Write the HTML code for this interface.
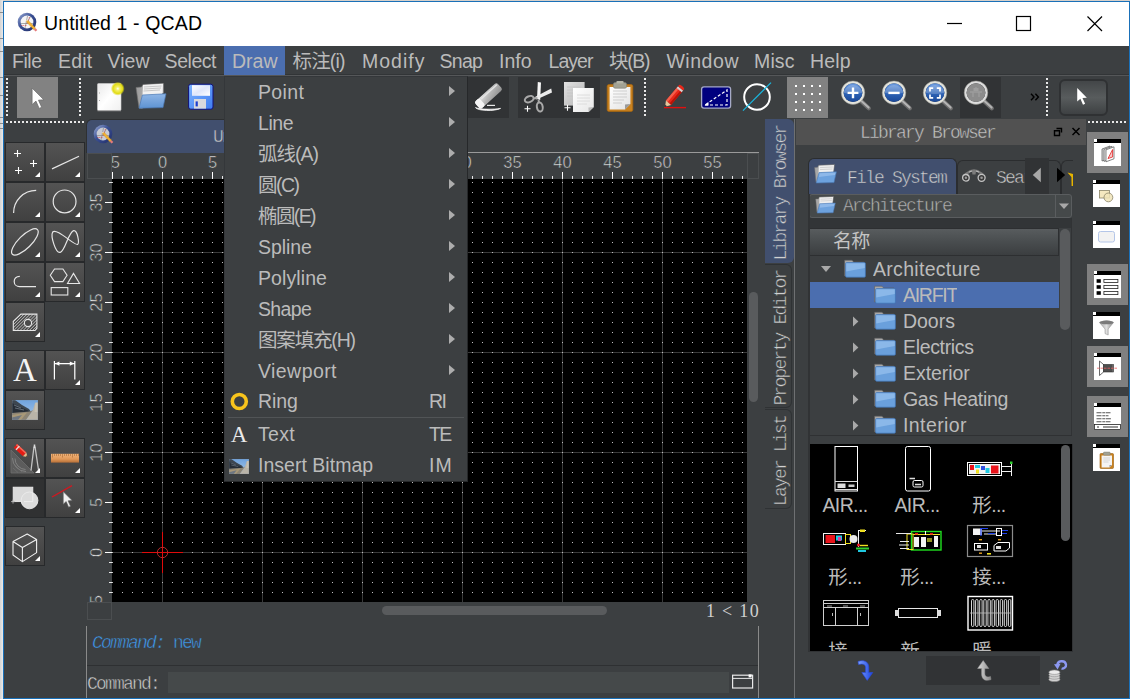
<!DOCTYPE html><html><head><meta charset="utf-8"><title>Untitled 1 - QCAD</title><style>
html,body{margin:0;padding:0;}
body{width:1130px;height:699px;overflow:hidden;background:#3c3f41;position:relative;font-family:"Liberation Sans","Noto Sans CJK SC",sans-serif;color:#bbbbbb;}
#root{position:absolute;left:0;top:0;width:1130px;height:699px;overflow:hidden;background:#3c3f41;}
.a{position:absolute;}
.t{position:absolute;white-space:pre;line-height:1;}
.mi{position:absolute;top:51.2px;font-size:19.5px;line-height:21px;color:#bbbbbb;white-space:pre;}
.mono{font-family:"Liberation Mono","Noto Sans CJK SC",monospace;}
.serif{font-family:"Liberation Serif","Noto Serif CJK SC",serif;}
.tb{position:absolute;width:40px;height:40px;box-sizing:border-box;border:1px solid #27292b;background:linear-gradient(#535353,#404040);}
.tb i{position:absolute;right:4px;bottom:4px;width:0;height:0;border-left:5px solid transparent;border-bottom:5px solid #fff;}
.tb svg{position:absolute;left:0;top:0;}
.row{position:absolute;left:810px;width:250px;height:26px;font-size:19.5px;line-height:26px;color:#bbbbbb;white-space:pre;}
.pm{position:absolute;left:258px;font-size:18px;line-height:22px;color:#bbbbbb;white-space:pre;}
.arr{position:absolute;left:449px;width:0;height:0;border-top:5px solid transparent;border-bottom:5px solid transparent;border-left:6px solid #adadad;}
.rb{position:absolute;left:1087px;width:41px;height:41px;}
.rb.on{background:#808080;}
.ic{position:absolute;left:7px;top:7px;width:27px;height:27px;background:#fff;overflow:hidden;}
.ic:before{content:"";position:absolute;left:0;top:0;width:27px;height:4px;background:#000;}
.ic:after{content:"";position:absolute;left:0;top:0;width:3px;height:3px;background:#fff;border-right:1px solid #000;border-bottom:1px solid #000;}
.lbl{position:absolute;font-size:19.5px;line-height:20px;letter-spacing:-0.6px;color:#bbbbbb;white-space:pre;text-align:center;width:72px;}
</style></head><body><div id="root">
<div class="a" style="left:0;top:0;width:1130px;height:1px;background:#d6d0ca"></div>
<div class="a" style="left:0;top:0;width:3px;height:699px;background:linear-gradient(90deg,#d4d4d4,#e9e9e9)"></div>
<div class="a" style="left:0;top:12px;width:3px;height:1px;background:#8c8c8c"></div>
<div class="a" style="left:0;top:38px;width:3px;height:1px;background:#8c8c8c"></div>
<div class="a" style="left:0;top:51px;width:3px;height:1px;background:#8c8c8c"></div>
<div class="a" style="left:0;top:77px;width:3px;height:1px;background:#8c8c8c"></div>
<div class="a" style="left:0;top:95px;width:3px;height:1px;background:#8c8c8c"></div>
<div class="a" style="left:0;top:117px;width:3px;height:1px;background:#8c8c8c"></div>
<div class="a" style="left:0;top:123px;width:3px;height:1px;background:#8c8c8c"></div>
<div class="a" style="left:0;top:128px;width:3px;height:1px;background:#8c8c8c"></div>
<div class="a" style="left:3px;top:1px;width:1127px;height:698px;box-sizing:border-box;border:1px solid #1a70b8;pointer-events:none;z-index:50"></div>
<div class="a" style="left:4px;top:2px;width:1125px;height:44px;background:#fff"></div>
<svg class="a" style="left:17px;top:12px" width="23" height="23" viewBox="0 0 23 23">
<defs><linearGradient id="qg1712" x1="0" y1="0" x2="1" y2="1"><stop offset="0" stop-color="#9fb0d8"/><stop offset="0.45" stop-color="#3a4f94"/><stop offset="1" stop-color="#1f2c66"/></linearGradient></defs>
<circle cx="10" cy="10" r="9.3" fill="url(#qg1712)"/>
<circle cx="10" cy="10" r="6.4" fill="#f4f4f6"/>
<path d="M4 11.5H16M10.5 4L8 16M13.5 4.5L9.5 12" stroke="#8a8a8a" stroke-width="0.7" fill="none"/>
<path d="M4.5 13.5H10M12.5 5L10 12" stroke="#e04040" stroke-width="0.7" stroke-dasharray="1 0.7" fill="none"/>
<path d="M9.3 9.6L11.2 8.4L18.6 16.2L16.8 17.8Z" fill="#f3b233" stroke="#c98a1a" stroke-width="0.4"/>
<path d="M16.8 17.8L18.6 16.2L20.3 18L18.6 19.6Z" fill="#e47a7a"/>
<path d="M9.3 9.6L11.2 8.4L9 7.9Z" fill="#f7e2b0"/>
</svg>
<div class="t" style="left:44px;top:12px;font-size:19.5px;line-height:23px;color:#000;letter-spacing:0.12px">Untitled 1 - QCAD</div>
<svg class="a" style="left:930px;top:2px" width="199" height="44" viewBox="0 0 199 44">
<path d="M17 21.5H32" stroke="#000" stroke-width="1.2" fill="none"/>
<rect x="86.5" y="14.5" width="14" height="14" stroke="#000" stroke-width="1.2" fill="none"/>
<path d="M157.5 14.5L172 29M172 14.5L157.5 29" stroke="#000" stroke-width="1.2" fill="none"/>
</svg>
<div class="a" style="left:4px;top:46px;width:1125px;height:29px;background:#3c3f41"></div>
<div class="a" style="left:4px;top:74px;width:1125px;height:1px;background:#323537"></div>
<div class="a" style="left:4px;top:75px;width:1125px;height:1px;background:#555759"></div>
<div class="a" style="left:224px;top:46px;width:61px;height:29px;background:#4b6eaf"></div>
<div class="mi" style="left:12.0px;letter-spacing:-0.44px">File</div>
<div class="mi" style="left:58.0px;letter-spacing:0.16px">Edit</div>
<div class="mi" style="left:107.6px;letter-spacing:-0.01px">View</div>
<div class="mi" style="left:164.6px;letter-spacing:-0.46px">Select</div>
<div class="mi" style="left:232.0px;letter-spacing:-0.01px">Draw</div>
<div class="mi" style="left:292.6px;letter-spacing:-0.86px">标注(i)</div>
<div class="mi" style="left:362.0px;letter-spacing:1.00px">Modify</div>
<div class="mi" style="left:439.6px;letter-spacing:-0.75px">Snap</div>
<div class="mi" style="left:499.0px;letter-spacing:-0.01px">Info</div>
<div class="mi" style="left:548.6px;letter-spacing:-0.97px">Layer</div>
<div class="mi" style="left:609.0px;letter-spacing:-1.33px">块(B)</div>
<div class="mi" style="left:666.4px;letter-spacing:0.55px">Window</div>
<div class="mi" style="left:754.0px;letter-spacing:0.14px">Misc</div>
<div class="mi" style="left:810.0px;letter-spacing:0.13px">Help</div>
<div class="a" style="left:6px;top:78px;width:2px;height:38px;background:repeating-linear-gradient(180deg,#e8e8e8 0 2px,transparent 2px 4px)"></div>
<div class="a" style="left:79px;top:78px;width:2px;height:38px;background:repeating-linear-gradient(180deg,#e8e8e8 0 2px,transparent 2px 4px)"></div>
<div class="a" style="left:6px;top:121px;width:78px;height:2px;background:repeating-linear-gradient(90deg,#e8e8e8 0 2px,transparent 2px 4px)"></div>
<div class="a" style="left:644px;top:78px;width:2px;height:38px;background:repeating-linear-gradient(180deg,#e8e8e8 0 2px,transparent 2px 4px)"></div>
<div class="a" style="left:1046px;top:78px;width:2px;height:38px;background:repeating-linear-gradient(180deg,#e8e8e8 0 2px,transparent 2px 4px)"></div>
<div class="a" style="left:1088px;top:121px;width:40px;height:2px;background:repeating-linear-gradient(90deg,#e8e8e8 0 2px,transparent 2px 4px)"></div>
<div class="a" style="left:17px;top:77px;width:41px;height:41px;background:#828282"></div>
<svg class="a" style="left:31px;top:87px" width="15" height="23" viewBox="-1 -1 14 21.5"><path d="M0 0V15.5L3.6 12.2L6.6 19L9 18L6 11.3L11 11Z" fill="#fff" stroke="#6a6a6a" stroke-width="0.7"/></svg>
<div class="a" style="left:468px;top:77px;width:41px;height:41px;background:#313335"></div>
<div class="a" style="left:518px;top:77px;width:82px;height:41px;background:#313335"></div>
<div class="a" style="left:960px;top:77px;width:41px;height:41px;background:#313335"></div>
<div class="a" style="left:787px;top:77px;width:41px;height:41px;background:#828282"></div>
<svg class="a" style="left:787px;top:77px" width="41" height="41" fill="#fff" shape-rendering="crispEdges"><rect x="8" y="8" width="2" height="2"/><rect x="8" y="16" width="2" height="2"/><rect x="8" y="24" width="2" height="2"/><rect x="8" y="32" width="2" height="2"/><rect x="16" y="8" width="2" height="2"/><rect x="16" y="16" width="2" height="2"/><rect x="16" y="24" width="2" height="2"/><rect x="16" y="32" width="2" height="2"/><rect x="24" y="8" width="2" height="2"/><rect x="24" y="16" width="2" height="2"/><rect x="24" y="24" width="2" height="2"/><rect x="24" y="32" width="2" height="2"/><rect x="32" y="8" width="2" height="2"/><rect x="32" y="16" width="2" height="2"/><rect x="32" y="24" width="2" height="2"/><rect x="32" y="32" width="2" height="2"/></svg>
<svg class="a" style="left:94px;top:79px" width="34" height="36" viewBox="0 0 34 36">
<defs><linearGradient id="pg" x1="0" y1="0" x2="1" y2="1"><stop offset="0" stop-color="#e9e9e9"/><stop offset="0.5" stop-color="#ffffff"/><stop offset="1" stop-color="#f0f0f0"/></linearGradient>
<radialGradient id="yg"><stop offset="0" stop-color="#ffffff"/><stop offset="0.25" stop-color="#f4f06a"/><stop offset="0.7" stop-color="#e2dc14"/><stop offset="1" stop-color="#d8d000" stop-opacity="0"/></radialGradient></defs>
<rect x="3.5" y="4.5" width="23.5" height="27" rx="1" fill="url(#pg)" stroke="#cfcfcf" stroke-width="0.6"/>
<path d="M3.5 31.8H27" stroke="#9a9a9a" stroke-width="0.8"/>
<rect x="5" y="13.6" width="1" height="0.8" fill="#999"/><rect x="5" y="21.2" width="1" height="0.8" fill="#999"/>
<circle cx="23.8" cy="9.7" r="7" fill="url(#yg)"/>
</svg>
<svg class="a" style="left:134px;top:79px" width="36" height="36" viewBox="0 0 36 36">
<defs><linearGradient id="fb" x1="0" y1="0" x2="0" y2="1"><stop offset="0" stop-color="#8fb6e6"/><stop offset="1" stop-color="#5e93d2"/></linearGradient>
<linearGradient id="fg" x1="0" y1="0" x2="1" y2="0"><stop offset="0" stop-color="#9a9a9a"/><stop offset="1" stop-color="#d8d8d8"/></linearGradient></defs>
<path d="M2 8.5L7.5 8L9 5.5L29.5 4.5L29.5 14L8 29.5L5 29Z" fill="url(#fg)" stroke="#6e6e6e" stroke-width="0.6"/>
<path d="M9 6L29 4.8L28 15L8 26Z" fill="#f1f1f1"/>
<path d="M10 8L27.5 7M10 10L27 9M9.5 12L26 11" stroke="#b5b5b5" stroke-width="0.7"/>
<path d="M8.4 16L32 14.8L29 28.6L5 29.2Z" fill="url(#fb)" stroke="#4a78b4" stroke-width="0.7"/>
</svg>
<svg class="a" style="left:186px;top:82px" width="30" height="30" viewBox="0 0 30 30">
<defs><linearGradient id="sv" x1="0" y1="0" x2="1" y2="1"><stop offset="0" stop-color="#7db4ff"/><stop offset="1" stop-color="#3f7cf0"/></linearGradient>
<linearGradient id="lb" x1="0" y1="0" x2="1" y2="1"><stop offset="0" stop-color="#ffffff"/><stop offset="0.5" stop-color="#dfe6fb"/><stop offset="1" stop-color="#ffffff"/></linearGradient></defs>
<rect x="2.6" y="2.2" width="24.4" height="25" rx="2.2" fill="url(#sv)" stroke="#10107a" stroke-width="1"/>
<rect x="6" y="3.2" width="18" height="10.6" fill="url(#lb)"/>
<rect x="8" y="17" width="12" height="9.6" fill="#d9d9dd"/>
<rect x="9.6" y="19.4" width="2.2" height="5" fill="#1c3fd0"/>
</svg>
<svg class="a" style="left:468px;top:77px" width="41" height="41" viewBox="0 0 41 41">
<defs><linearGradient id="er" x1="0" y1="0" x2="1" y2="1"><stop offset="0" stop-color="#f2f2f2"/><stop offset="0.5" stop-color="#b8b8b8"/><stop offset="1" stop-color="#8e8e8e"/></linearGradient></defs>
<g transform="rotate(-42 20 19)"><rect x="5.5" y="14.5" width="30" height="9.5" rx="2.5" fill="url(#er)"/>
<rect x="5.5" y="14.5" width="6.5" height="9.5" rx="2" fill="#f4f4f4"/><path d="M13 16.6H34" stroke="#e4e4e4" stroke-width="1.4"/></g>
<path d="M7.5 30.6C10 34 26 34.6 32.6 31.4C26 32.6 12 32.6 7.5 30.6Z" fill="#f4f4f4" stroke="#f4f4f4" stroke-width="0.8"/>
<path d="M19 28.4H27" stroke="#e8e8e8" stroke-width="1.2"/>
</svg>
<svg class="a" style="left:518px;top:77px" width="41" height="41" viewBox="0 0 41 41">
<path d="M19.8 5L23 5.5L22.2 23L19 22Z" fill="#f6f6f6"/>
<path d="M33.2 11.6L34 15.4L18.5 22.5L17 20Z" fill="#ececec"/>
<ellipse cx="11.2" cy="22.2" rx="4.6" ry="2.9" transform="rotate(-22 11.2 22.2)" fill="none" stroke="#a9a9a9" stroke-width="2"/>
<ellipse cx="21.8" cy="30" rx="2.9" ry="4.6" transform="rotate(-10 21.8 30)" fill="none" stroke="#a9a9a9" stroke-width="2"/>
<path d="M15 21.5L19.5 21M20.5 23L21 26" stroke="#a9a9a9" stroke-width="2"/>
<path d="M6.5 31.8H12.5M9.5 28.8V34.8" stroke="#fff" stroke-width="1.1"/>
</svg>
<svg class="a" style="left:559px;top:77px" width="41" height="41" viewBox="0 0 41 41">
<defs><linearGradient id="cp1" x1="0" y1="0" x2="1" y2="1"><stop offset="0" stop-color="#e2e2e2"/><stop offset="1" stop-color="#b4b4b4"/></linearGradient>
<linearGradient id="cp2" x1="0" y1="0" x2="1" y2="1"><stop offset="0" stop-color="#ffffff"/><stop offset="1" stop-color="#e6e6e6"/></linearGradient></defs>
<rect x="5" y="5" width="20.6" height="23.6" fill="url(#cp1)"/>
<path d="M8 10H22M8 13H22M8 16H22M8 19H22" stroke="#c4c4c4" stroke-width="0.8"/>
<path d="M14 11H34.8V30L29.6 35H14Z" fill="url(#cp2)"/>
<path d="M34.8 30L29.6 35L29.4 30.4Z" fill="#bdbdbd"/>
<path d="M18 18H31M18 21H31M18 24H31M18 27H28" stroke="#dadada" stroke-width="0.9"/>
<path d="M5.5 30.8H11.5M8.5 27.8V33.8" stroke="#fff" stroke-width="1.1"/>
</svg>
<svg class="a" style="left:600px;top:77px" width="41" height="41" viewBox="0 0 41 41">
<defs><linearGradient id="pp" x1="0" y1="0" x2="1" y2="1"><stop offset="0" stop-color="#ffffff"/><stop offset="1" stop-color="#e2e2e2"/></linearGradient></defs>
<rect x="7.2" y="7.6" width="25.6" height="26.8" rx="1.6" fill="#c8811f" stroke="#a7660f" stroke-width="0.8"/>
<path d="M9.6 10H30.4V27L25 32.4H9.6Z" fill="url(#pp)"/>
<path d="M30.4 27L25 32.4L25 27.4Z" fill="#9a9a9a"/>
<path d="M13 14H27M13 17H27M13 20H27M13 23H24M13 26H22" stroke="#c9c9c9" stroke-width="0.9"/>
<rect x="13.4" y="5.6" width="13.2" height="5.6" rx="1.6" fill="#a2a294" stroke="#7e7e72" stroke-width="0.6"/>
<rect x="16.4" y="4" width="7.2" height="2.6" rx="1" fill="#b5b5a8"/>
</svg>
<svg class="a" style="left:654px;top:77px" width="41" height="41" viewBox="0 0 41 41">
<path d="M10 30.6H32" stroke="#e01010" stroke-width="1.4"/>
<g transform="translate(21 18) rotate(-50) scale(0.92) translate(-19 -19.2)"><rect x="8" y="15.6" width="19" height="7.2" fill="#e8281a"/><rect x="8" y="15.6" width="19" height="2.4" fill="#f4604c"/><rect x="8" y="20.6" width="19" height="2.2" fill="#b81408"/>
<rect x="26" y="15.6" width="2.4" height="7.2" fill="#d8d0d0"/><path d="M28.4 15.6H30.5Q32.4 19.2 30.5 22.8H28.4Z" fill="#e8281a"/>
<path d="M8 15.6L2.2 19.2L8 22.8Z" fill="#e8c49a"/><path d="M4 18L2 19.2L4 20.4Z" fill="#222"/></g>
</svg>
<svg class="a" style="left:695px;top:77px" width="41" height="41" viewBox="0 0 41 41">
<rect x="6.6" y="9.8" width="29" height="21.4" rx="2.4" fill="#00007e" stroke="#a6aac6" stroke-width="1.3"/>
<path d="M10 28H32V13Z" fill="none" stroke="#fff" stroke-width="1.2" stroke-dasharray="3 2"/>
<path d="M9.6 28.4L13.4 25L13.6 28.4Z" fill="#fff"/>
</svg>
<svg class="a" style="left:736px;top:77px" width="41" height="41" viewBox="0 0 41 41">
<circle cx="21" cy="20" r="12.8" fill="none" stroke="#fff" stroke-width="2"/>
<path d="M7 33.6L35 5.6" stroke="#18b8e0" stroke-width="1.2"/>
</svg>
<svg width="0" height="0" style="position:absolute"><defs><linearGradient id="lg" x1="0" y1="0" x2="0" y2="1"><stop offset="0" stop-color="#6c9be0"/><stop offset="0.5" stop-color="#2f65b8"/><stop offset="1" stop-color="#1a4796"/></linearGradient></defs></svg>
<svg class="a" style="left:837.2px;top:77px" width="38" height="41" viewBox="0 0 38 41">
<path d="M23.6 23.6L31.8 31.2" stroke="#6e6e6e" stroke-width="4.2" stroke-linecap="round"/>
<path d="M23.6 23.2L31.6 30.6" stroke="#b4b4b4" stroke-width="2" stroke-linecap="round"/>
<circle cx="16" cy="15.7" r="10.6" fill="none" stroke="#e4e4dc" stroke-width="2.4"/>
<circle cx="16" cy="15.7" r="11.8" fill="none" stroke="#8a8a84" stroke-width="0.5"/>
<circle cx="16" cy="15.7" r="9.4" fill="url(#lg)"/><path d="M6.6 15.7A9.6 9.6 0 0 1 25.4 15.7Q16 18.4 6.6 15.7Z" fill="#fff" opacity="0.22"/><path d="M10.6 15.9H21.4M16 10.5V21.3" stroke="#fff" stroke-width="2.4"/></svg>
<svg class="a" style="left:878.1px;top:77px" width="38" height="41" viewBox="0 0 38 41">
<path d="M23.6 23.6L31.8 31.2" stroke="#6e6e6e" stroke-width="4.2" stroke-linecap="round"/>
<path d="M23.6 23.2L31.6 30.6" stroke="#b4b4b4" stroke-width="2" stroke-linecap="round"/>
<circle cx="16" cy="15.7" r="10.6" fill="none" stroke="#e4e4dc" stroke-width="2.4"/>
<circle cx="16" cy="15.7" r="11.8" fill="none" stroke="#8a8a84" stroke-width="0.5"/>
<circle cx="16" cy="15.7" r="9.4" fill="url(#lg)"/><path d="M6.6 15.7A9.6 9.6 0 0 1 25.4 15.7Q16 18.4 6.6 15.7Z" fill="#fff" opacity="0.22"/><path d="M10.4 15.9H21.6" stroke="#fff" stroke-width="2.4"/></svg>
<svg class="a" style="left:919.2px;top:77px" width="38" height="41" viewBox="0 0 38 41">
<path d="M23.6 23.6L31.8 31.2" stroke="#6e6e6e" stroke-width="4.2" stroke-linecap="round"/>
<path d="M23.6 23.2L31.6 30.6" stroke="#b4b4b4" stroke-width="2" stroke-linecap="round"/>
<circle cx="16" cy="15.7" r="10.6" fill="none" stroke="#e4e4dc" stroke-width="2.4"/>
<circle cx="16" cy="15.7" r="11.8" fill="none" stroke="#8a8a84" stroke-width="0.5"/>
<circle cx="16" cy="15.7" r="9.4" fill="url(#lg)"/><path d="M6.6 15.7A9.6 9.6 0 0 1 25.4 15.7Q16 18.4 6.6 15.7Z" fill="#fff" opacity="0.22"/><path d="M11 14.4V11.2H14.2M17.8 11.2H21V14.4M21 17.6V20.8H17.8M14.2 20.8H11V17.6" stroke="#fff" stroke-width="1.7" fill="none"/></svg>
<svg class="a" style="left:960.1px;top:77px" width="38" height="41" viewBox="0 0 38 41">
<path d="M23.6 23.6L31.8 31.2" stroke="#6e6e6e" stroke-width="4.2" stroke-linecap="round"/>
<path d="M23.6 23.2L31.6 30.6" stroke="#b4b4b4" stroke-width="2" stroke-linecap="round"/>
<circle cx="16" cy="15.7" r="10.6" fill="none" stroke="#dedede" stroke-width="2.4"/>
<circle cx="16" cy="15.7" r="11.8" fill="none" stroke="#8a8a84" stroke-width="0.5"/>
<circle cx="16" cy="15.7" r="9.4" fill="#8c8c8c"/><path d="M10 15H22M13 20V15M19 20V15M16 10V14" stroke="#9c9c9c" stroke-width="1.4"/><rect x="13.5" y="11" width="5" height="3" fill="#9e9e9e"/></svg>
<svg class="a" style="left:1030px;top:93px" width="10" height="8" viewBox="0 0 10 8"><path d="M1 0.8L4 4L1 7.2M5.4 0.8L8.4 4L5.4 7.2" stroke="#000" stroke-width="1.4" fill="none"/></svg>
<div class="a" style="left:1059px;top:79px;width:49px;height:37px;box-sizing:border-box;border:2px solid #2f3133;border-radius:6px;background:linear-gradient(#434648,#585c5d 50%,#3e4143)"></div>
<svg class="a" style="left:1077px;top:88px" width="12" height="20" viewBox="0 0 13.2 22.8"><path d="M0 0V15.5L3.6 12.2L6.6 19L9 18L6 11.3L11 11Z" fill="#fff"/></svg>
<div class="tb" style="left:5px;top:142px;"><svg width="38" height="38" viewBox="6 143 38 38" fill="none" stroke="#e6e6e6" stroke-width="1.1"><path d="M14 153.5H21M17.5 150V157M30 163.5H37M33.5 160V167M15 170.5H22M18.5 167V174" stroke="#fff" stroke-width="1.1"/></svg><i></i></div>
<div class="tb" style="left:45px;top:142px;"><svg width="38" height="38" viewBox="46 143 38 38" fill="none" stroke="#e6e6e6" stroke-width="1.1"><path d="M52 168.9L79 156.3" stroke-width="1.2"/></svg><i></i></div>
<div class="tb" style="left:5px;top:182px;"><svg width="38" height="38" viewBox="6 183 38 38" fill="none" stroke="#e6e6e6" stroke-width="1.1"><path d="M13.6 213A22.6 22.6 0 0 1 36.2 190.4" stroke-width="1.2"/></svg><i></i></div>
<div class="tb" style="left:45px;top:182px;"><svg width="38" height="38" viewBox="46 183 38 38" fill="none" stroke="#e6e6e6" stroke-width="1.1"><circle cx="64.6" cy="201.4" r="11.4" stroke-width="1.2"/></svg><i></i></div>
<div class="tb" style="left:5px;top:222px;"><svg width="38" height="38" viewBox="6 223 38 38" fill="none" stroke="#e6e6e6" stroke-width="1.1"><ellipse cx="24.9" cy="241.9" rx="17.6" ry="6.4" transform="rotate(-44.5 24.9 241.9)" stroke-width="1.2"/></svg><i></i></div>
<div class="tb" style="left:45px;top:222px;"><svg width="38" height="38" viewBox="46 223 38 38" fill="none" stroke="#e6e6e6" stroke-width="1.1"><path d="M52.6 232.2C50.5 236 55.5 253.5 60.2 252.4C65 251.3 68.5 232 73.6 230.6C77.5 229.6 79.5 243 77.6 244.4C75 246.3 56 227 52.6 232.2Z" stroke-width="1.2"/></svg><i></i></div>
<div class="tb" style="left:5px;top:262px;"><svg width="38" height="38" viewBox="6 263 38 38" fill="none" stroke="#e6e6e6" stroke-width="1.1"><path d="M19.8 276.3C15.8 276.3 14.2 279 14.2 281.4C14.2 284.4 16.6 286.6 19.6 286.6H36" stroke-width="1.2"/></svg><i></i></div>
<div class="tb" style="left:45px;top:262px;"><svg width="38" height="38" viewBox="46 263 38 38" fill="none" stroke="#e6e6e6" stroke-width="1.1"><polygon points="67.1,275.3 62.9,281.6 54.5,281.6 50.3,275.3 54.5,269.0 62.9,269.0" stroke-width="1.1"/><polygon points="73.5,273.4 67.5,283.5 79.6,283.5" stroke-width="1.1"/><rect x="51.2" y="287.6" width="16.6" height="7.4" stroke-width="1.1"/></svg><i></i></div>
<div class="tb" style="left:5px;top:302px;"><svg width="38" height="38" viewBox="6 303 38 38" fill="none" stroke="#e6e6e6" stroke-width="1.1"><defs><clipPath id="hc"><path d="M13.3 321.3L20.9 314.1H36.9V328.2L35 330.5H13.3Z M31.6 323A3.6 3.6 0 1 0 24.4 323A3.6 3.6 0 1 0 31.6 323Z" clip-rule="evenodd"/></clipPath></defs><g clip-path="url(#hc)" stroke-width="0.8" stroke="#dcdcdc"><path d="M-5.3 331L11.7 314" /><path d="M-2.2 331L14.8 314" /><path d="M0.9 331L17.9 314" /><path d="M4.0 331L21.0 314" /><path d="M7.1 331L24.1 314" /><path d="M10.2 331L27.2 314" /><path d="M13.3 331L30.3 314" /><path d="M16.4 331L33.4 314" /><path d="M19.5 331L36.5 314" /><path d="M22.6 331L39.6 314" /><path d="M25.7 331L42.7 314" /><path d="M28.8 331L45.8 314" /><path d="M31.9 331L48.9 314" /><path d="M35.0 331L52.0 314" /><path d="M38.1 331L55.1 314" /></g><path d="M13.3 321.3L20.9 314.1H36.9V328.2L35 330.5H13.3Z" stroke-width="1.1"/><circle cx="28" cy="323" r="3.6" stroke-width="1.1" fill="#4a4a4a"/></svg><i></i></div>
<div class="tb" style="left:5px;top:350px;"><span class="serif" style="position:absolute;left:0;top:0;width:38px;text-align:center;font-size:33px;line-height:38px;color:#f4f4f4">A</span></div>
<div class="tb" style="left:45px;top:350px;"><svg width="38" height="38" viewBox="46 351 38 38" fill="none" stroke="#e6e6e6" stroke-width="1.1"><path d="M54.4 361V379.5M74.8 361V379.5M55 363.6H74.2" stroke="#fff" stroke-width="1.2"/><path d="M55 363.6L59.4 361.4V365.8ZM74.2 363.6L69.8 361.4V365.8Z" fill="#fff" stroke="none"/></svg><i></i></div>
<div class="tb" style="left:5px;top:390px;"></div>
<svg class="a" style="left:12px;top:400px" width="26" height="20" viewBox="0 0 26 20" preserveAspectRatio="none">
<defs><linearGradient id="ska" x1="0" y1="0" x2="0" y2="1"><stop offset="0" stop-color="#6fa3de"/><stop offset="1" stop-color="#a9c7e8"/></linearGradient></defs>
<rect width="26" height="20" fill="url(#ska)"/>
<path d="M0 0H3L10 5L17 9L19 12L0 16Z" fill="#3d4650"/>
<path d="M0 3L8 7L16 10.5L17 12L0 13Z" fill="#262d36"/>
<path d="M2 5L9 8M3 8L12 10" stroke="#8e9aa6" stroke-width="0.6"/>
<path d="M23 3H26V20H14L21 10Z" fill="#b9b4a8"/>
<path d="M0 13L18 11.5L21 10L14 20H0Z" fill="#8c8474"/>
<path d="M0 15L15 12.5L9 20H0Z" fill="#a89878"/>
<path d="M0 17.5L10 15L6 20H0Z" fill="#6e7680"/>
<path d="M23.5 2.5H26V12H22.5Z" fill="#c8c2b4"/>
<rect width="26" height="20" fill="none" stroke="#7f8fa0" stroke-width="0.5"/>
</svg>
<div class="tb" style="left:5px;top:438px;"><svg width="38" height="38" viewBox="6 439 38 38" fill="none" stroke="#e6e6e6" stroke-width="1.1"><path d="M11 450L11 473L34 473Z" fill="#5c5c5c" stroke="#6e6e6e" stroke-width="0.8"/>
<path d="M12.5 458A13.5 13.5 0 0 0 26 471.5M15 458.5A11 11 0 0 0 25.5 469.5" stroke="#8a8a8a" stroke-width="0.8"/>
<path d="M13 463L22 472M13 468L18 472.5" stroke="#777" stroke-width="0.6"/>
<g transform="rotate(42 22 452)"><rect x="13" y="449.4" width="12.5" height="5" fill="#e41c14" stroke="none"/><rect x="13" y="449.4" width="12.5" height="1.6" fill="#f46858" stroke="none"/><rect x="15.4" y="449.4" width="1.4" height="5" fill="#e8d8d8" stroke="none"/><path d="M25.5 449.4L29.4 451.9L25.5 454.4Z" fill="#e4b888" stroke="none"/><path d="M28 451L29.6 451.9L28 452.8Z" fill="#222" stroke="none"/></g>
<path d="M34 446.5L31 470.5M35 446.5L38.6 470.5" stroke="#c4c4c4" stroke-width="1.3"/><path d="M34.5 444.5V448" stroke="#dcdcdc" stroke-width="1.6"/></svg><i></i></div>
<div class="tb" style="left:45px;top:438px;"><svg width="38" height="38" viewBox="46 439 38 38" fill="none" stroke="#e6e6e6" stroke-width="1.1"><defs><linearGradient id="rl" x1="0" y1="0" x2="0" y2="1"><stop offset="0" stop-color="#f0b47c"/><stop offset="0.6" stop-color="#e09858"/><stop offset="1" stop-color="#b87038"/></linearGradient></defs>
<rect x="51" y="453.8" width="28" height="8.8" fill="url(#rl)" stroke="none"/><g stroke="#a86a34" stroke-width="0.6"><path d="M52.5 454V457.5" /><path d="M54.5 454V456" /><path d="M56.5 454V456" /><path d="M58.5 454V456" /><path d="M60.5 454V456" /><path d="M62.5 454V457.5" /><path d="M64.5 454V456" /><path d="M66.5 454V456" /><path d="M68.5 454V456" /><path d="M70.5 454V456" /><path d="M72.5 454V457.5" /><path d="M74.5 454V456" /><path d="M76.5 454V456" /><path d="M78.5 454V456" /></g></svg><i></i></div>
<div class="tb" style="left:5px;top:478px;background:#303132;"><svg width="38" height="38" viewBox="6 479 38 38" fill="none" stroke="#e6e6e6" stroke-width="1.1"><rect x="13.2" y="487.2" width="19.6" height="14.4" fill="#dadada" stroke="#ececec" stroke-width="0.9"/>
<circle cx="29.5" cy="500.4" r="8.4" fill="#dcdcdc" stroke="#ececec" stroke-width="0.9"/><path d="M24 501.6H32.8V493" stroke="#f2f2f2" stroke-width="0.8"/>
<path d="M11 501.6H15M13 499.6V503.6" stroke="#bcbcbc" stroke-width="0.8"/></svg></div>
<div class="tb" style="left:45px;top:478px;"><svg width="38" height="38" viewBox="46 479 38 38" fill="none" stroke="#e6e6e6" stroke-width="1.1"><path d="M52 497L72 485.6" stroke="#d01820" stroke-width="1.4"/>
<g transform="translate(63.2 491.6) scale(0.82)"><path d="M0 0V15.5L3.6 12.2L6.6 19L9 18L6 11.3L11 11Z" fill="#f0f0f0" stroke="#5a5a5a" stroke-width="0.8"/></g></svg><i></i></div>
<div class="tb" style="left:5px;top:526px;"><svg width="38" height="38" viewBox="6 527 38 38" fill="none" stroke="#e6e6e6" stroke-width="1.1"><path d="M13 541.5L27.2 534L36.6 539.5L22.4 547.5ZM13 541.5V555L22.4 561.6V547.5M22.4 561.6L36.6 552.6V539.5" stroke="#f0f0f0" stroke-width="1.1" stroke-linejoin="round"/></svg><i></i></div>
<div class="a" style="left:86px;top:119px;width:355px;height:34px;box-sizing:border-box;border:1px solid #2e3032;border-bottom:none;background:#414f6e;border-radius:6px 6px 0 0"></div>
<svg class="a" style="left:93px;top:124px" width="23" height="23" viewBox="0 0 23 23">
<defs><linearGradient id="qg93124" x1="0" y1="0" x2="1" y2="1"><stop offset="0" stop-color="#9fb0d8"/><stop offset="0.45" stop-color="#3a4f94"/><stop offset="1" stop-color="#1f2c66"/></linearGradient></defs>
<circle cx="10" cy="10" r="9.3" fill="url(#qg93124)"/>
<circle cx="10" cy="10" r="6.4" fill="#c9ccd6"/>
<path d="M4 11.5H16M10.5 4L8 16M13.5 4.5L9.5 12" stroke="#8a8a8a" stroke-width="0.7" fill="none"/>
<path d="M4.5 13.5H10M12.5 5L10 12" stroke="#e04040" stroke-width="0.7" stroke-dasharray="1 0.7" fill="none"/>
<path d="M9.3 9.6L11.2 8.4L18.6 16.2L16.8 17.8Z" fill="#f3b233" stroke="#c98a1a" stroke-width="0.4"/>
<path d="M16.8 17.8L18.6 16.2L20.3 18L18.6 19.6Z" fill="#e47a7a"/>
<path d="M9.3 9.6L11.2 8.4L9 7.9Z" fill="#f7e2b0"/>
</svg>
<div class="t mono" style="left:213px;top:128px;font-size:18px;letter-spacing:-1.8px;color:#c6c6c6;-webkit-text-stroke:0.45px #414f6e">Untitled 1</div>
<div class="a" style="left:440px;top:152px;width:319px;height:1px;background:#9a9a9a"></div>
<svg class="a" style="left:0;top:0" width="1130" height="699" viewBox="0 0 1130 699" shape-rendering="crispEdges"><defs><pattern id="dots" x="2" y="2" width="10" height="10" patternUnits="userSpaceOnUse"><rect x="0" y="0" width="1" height="1" fill="#c4c4c4"/></pattern></defs><rect x="112" y="179" width="635" height="423" fill="#000"/><rect x="162" y="179" width="1" height="423" fill="#3a3a3a"/><rect x="262" y="179" width="1" height="423" fill="#3a3a3a"/><rect x="362" y="179" width="1" height="423" fill="#3a3a3a"/><rect x="462" y="179" width="1" height="423" fill="#3a3a3a"/><rect x="562" y="179" width="1" height="423" fill="#3a3a3a"/><rect x="662" y="179" width="1" height="423" fill="#3a3a3a"/><rect x="112" y="252" width="635" height="1" fill="#3a3a3a"/><rect x="112" y="352" width="635" height="1" fill="#3a3a3a"/><rect x="112" y="452" width="635" height="1" fill="#3a3a3a"/><rect x="112" y="552" width="635" height="1" fill="#3a3a3a"/><rect x="112" y="179" width="635" height="423" fill="url(#dots)"/><rect x="142" y="552" width="41" height="1" fill="#e00b0b"/><rect x="162" y="532" width="1" height="41" fill="#e00b0b"/><circle cx="162.5" cy="552.5" r="5.2" fill="none" stroke="#b42a2a" stroke-width="1" shape-rendering="auto"/><rect x="87.5" y="153.5" width="24" height="25" fill="#3c3f41" stroke="#4b4e50" stroke-width="1"/><rect x="747.5" y="153.5" width="11" height="25" fill="#3c3f41" stroke="#4b4e50" stroke-width="1"/><rect x="87.5" y="602.5" width="24" height="17" fill="#3c3f41" stroke="#4b4e50" stroke-width="1"/><rect x="112" y="172" width="1" height="7" fill="#fff"/><rect x="122" y="176" width="1" height="3" fill="#e8e8e8"/><rect x="132" y="176" width="1" height="3" fill="#e8e8e8"/><rect x="142" y="176" width="1" height="3" fill="#e8e8e8"/><rect x="152" y="176" width="1" height="3" fill="#e8e8e8"/><rect x="162" y="172" width="1" height="7" fill="#fff"/><rect x="172" y="176" width="1" height="3" fill="#e8e8e8"/><rect x="182" y="176" width="1" height="3" fill="#e8e8e8"/><rect x="192" y="176" width="1" height="3" fill="#e8e8e8"/><rect x="202" y="176" width="1" height="3" fill="#e8e8e8"/><rect x="212" y="172" width="1" height="7" fill="#fff"/><rect x="222" y="176" width="1" height="3" fill="#e8e8e8"/><rect x="232" y="176" width="1" height="3" fill="#e8e8e8"/><rect x="242" y="176" width="1" height="3" fill="#e8e8e8"/><rect x="252" y="176" width="1" height="3" fill="#e8e8e8"/><rect x="262" y="172" width="1" height="7" fill="#fff"/><rect x="272" y="176" width="1" height="3" fill="#e8e8e8"/><rect x="282" y="176" width="1" height="3" fill="#e8e8e8"/><rect x="292" y="176" width="1" height="3" fill="#e8e8e8"/><rect x="302" y="176" width="1" height="3" fill="#e8e8e8"/><rect x="312" y="172" width="1" height="7" fill="#fff"/><rect x="322" y="176" width="1" height="3" fill="#e8e8e8"/><rect x="332" y="176" width="1" height="3" fill="#e8e8e8"/><rect x="342" y="176" width="1" height="3" fill="#e8e8e8"/><rect x="352" y="176" width="1" height="3" fill="#e8e8e8"/><rect x="362" y="172" width="1" height="7" fill="#fff"/><rect x="372" y="176" width="1" height="3" fill="#e8e8e8"/><rect x="382" y="176" width="1" height="3" fill="#e8e8e8"/><rect x="392" y="176" width="1" height="3" fill="#e8e8e8"/><rect x="402" y="176" width="1" height="3" fill="#e8e8e8"/><rect x="412" y="172" width="1" height="7" fill="#fff"/><rect x="422" y="176" width="1" height="3" fill="#e8e8e8"/><rect x="432" y="176" width="1" height="3" fill="#e8e8e8"/><rect x="442" y="176" width="1" height="3" fill="#e8e8e8"/><rect x="452" y="176" width="1" height="3" fill="#e8e8e8"/><rect x="462" y="172" width="1" height="7" fill="#fff"/><rect x="472" y="176" width="1" height="3" fill="#e8e8e8"/><rect x="482" y="176" width="1" height="3" fill="#e8e8e8"/><rect x="492" y="176" width="1" height="3" fill="#e8e8e8"/><rect x="502" y="176" width="1" height="3" fill="#e8e8e8"/><rect x="512" y="172" width="1" height="7" fill="#fff"/><rect x="522" y="176" width="1" height="3" fill="#e8e8e8"/><rect x="532" y="176" width="1" height="3" fill="#e8e8e8"/><rect x="542" y="176" width="1" height="3" fill="#e8e8e8"/><rect x="552" y="176" width="1" height="3" fill="#e8e8e8"/><rect x="562" y="172" width="1" height="7" fill="#fff"/><rect x="572" y="176" width="1" height="3" fill="#e8e8e8"/><rect x="582" y="176" width="1" height="3" fill="#e8e8e8"/><rect x="592" y="176" width="1" height="3" fill="#e8e8e8"/><rect x="602" y="176" width="1" height="3" fill="#e8e8e8"/><rect x="612" y="172" width="1" height="7" fill="#fff"/><rect x="622" y="176" width="1" height="3" fill="#e8e8e8"/><rect x="632" y="176" width="1" height="3" fill="#e8e8e8"/><rect x="642" y="176" width="1" height="3" fill="#e8e8e8"/><rect x="652" y="176" width="1" height="3" fill="#e8e8e8"/><rect x="662" y="172" width="1" height="7" fill="#fff"/><rect x="672" y="176" width="1" height="3" fill="#e8e8e8"/><rect x="682" y="176" width="1" height="3" fill="#e8e8e8"/><rect x="692" y="176" width="1" height="3" fill="#e8e8e8"/><rect x="702" y="176" width="1" height="3" fill="#e8e8e8"/><rect x="712" y="172" width="1" height="7" fill="#fff"/><rect x="722" y="176" width="1" height="3" fill="#e8e8e8"/><rect x="732" y="176" width="1" height="3" fill="#e8e8e8"/><rect x="742" y="176" width="1" height="3" fill="#e8e8e8"/><rect x="109" y="592" width="3" height="1" fill="#e8e8e8"/><rect x="109" y="582" width="3" height="1" fill="#e8e8e8"/><rect x="109" y="572" width="3" height="1" fill="#e8e8e8"/><rect x="109" y="562" width="3" height="1" fill="#e8e8e8"/><rect x="105" y="552" width="7" height="1" fill="#fff"/><rect x="109" y="542" width="3" height="1" fill="#e8e8e8"/><rect x="109" y="532" width="3" height="1" fill="#e8e8e8"/><rect x="109" y="522" width="3" height="1" fill="#e8e8e8"/><rect x="109" y="512" width="3" height="1" fill="#e8e8e8"/><rect x="105" y="502" width="7" height="1" fill="#fff"/><rect x="109" y="492" width="3" height="1" fill="#e8e8e8"/><rect x="109" y="482" width="3" height="1" fill="#e8e8e8"/><rect x="109" y="472" width="3" height="1" fill="#e8e8e8"/><rect x="109" y="462" width="3" height="1" fill="#e8e8e8"/><rect x="105" y="452" width="7" height="1" fill="#fff"/><rect x="109" y="442" width="3" height="1" fill="#e8e8e8"/><rect x="109" y="432" width="3" height="1" fill="#e8e8e8"/><rect x="109" y="422" width="3" height="1" fill="#e8e8e8"/><rect x="109" y="412" width="3" height="1" fill="#e8e8e8"/><rect x="105" y="402" width="7" height="1" fill="#fff"/><rect x="109" y="392" width="3" height="1" fill="#e8e8e8"/><rect x="109" y="382" width="3" height="1" fill="#e8e8e8"/><rect x="109" y="372" width="3" height="1" fill="#e8e8e8"/><rect x="109" y="362" width="3" height="1" fill="#e8e8e8"/><rect x="105" y="352" width="7" height="1" fill="#fff"/><rect x="109" y="342" width="3" height="1" fill="#e8e8e8"/><rect x="109" y="332" width="3" height="1" fill="#e8e8e8"/><rect x="109" y="322" width="3" height="1" fill="#e8e8e8"/><rect x="109" y="312" width="3" height="1" fill="#e8e8e8"/><rect x="105" y="302" width="7" height="1" fill="#fff"/><rect x="109" y="292" width="3" height="1" fill="#e8e8e8"/><rect x="109" y="282" width="3" height="1" fill="#e8e8e8"/><rect x="109" y="272" width="3" height="1" fill="#e8e8e8"/><rect x="109" y="262" width="3" height="1" fill="#e8e8e8"/><rect x="105" y="252" width="7" height="1" fill="#fff"/><rect x="109" y="242" width="3" height="1" fill="#e8e8e8"/><rect x="109" y="232" width="3" height="1" fill="#e8e8e8"/><rect x="109" y="222" width="3" height="1" fill="#e8e8e8"/><rect x="109" y="212" width="3" height="1" fill="#e8e8e8"/><rect x="105" y="202" width="7" height="1" fill="#fff"/><rect x="109" y="192" width="3" height="1" fill="#e8e8e8"/><rect x="109" y="182" width="3" height="1" fill="#e8e8e8"/></svg>
<svg class="a" style="left:0;top:0" width="760" height="602" viewBox="0 0 760 602" font-family='Liberation Sans,Noto Sans CJK SC,sans-serif' font-size="16.5" fill="#e0e0e0" stroke="#3c3f41" stroke-width="0.55" paint-order="fill"><defs><clipPath id="ct"><rect x="112" y="153" width="635" height="26"/></clipPath><clipPath id="cl"><rect x="87" y="179" width="25" height="423"/></clipPath></defs><g clip-path="url(#ct)"><text x="112.5" y="168" text-anchor="middle">-5</text><text x="162.5" y="168" text-anchor="middle">0</text><text x="212.5" y="168" text-anchor="middle">5</text><text x="262.5" y="168" text-anchor="middle">10</text><text x="312.5" y="168" text-anchor="middle">15</text><text x="362.5" y="168" text-anchor="middle">20</text><text x="412.5" y="168" text-anchor="middle">25</text><text x="462.5" y="168" text-anchor="middle">30</text><text x="512.5" y="168" text-anchor="middle">35</text><text x="562.5" y="168" text-anchor="middle">40</text><text x="612.5" y="168" text-anchor="middle">45</text><text x="662.5" y="168" text-anchor="middle">50</text><text x="712.5" y="168" text-anchor="middle">55</text></g><g clip-path="url(#cl)"><text transform="translate(102 602.5) rotate(-90)" text-anchor="middle">-5</text><text transform="translate(102 552.5) rotate(-90)" text-anchor="middle">0</text><text transform="translate(102 502.5) rotate(-90)" text-anchor="middle">5</text><text transform="translate(102 452.5) rotate(-90)" text-anchor="middle">10</text><text transform="translate(102 402.5) rotate(-90)" text-anchor="middle">15</text><text transform="translate(102 352.5) rotate(-90)" text-anchor="middle">20</text><text transform="translate(102 302.5) rotate(-90)" text-anchor="middle">25</text><text transform="translate(102 252.5) rotate(-90)" text-anchor="middle">30</text><text transform="translate(102 202.5) rotate(-90)" text-anchor="middle">35</text></g></svg>
<div class="a" style="left:749px;top:292px;width:9px;height:110px;border-radius:4.5px;background:#595b5d"></div>
<div class="a" style="left:382px;top:606px;width:225px;height:9px;border-radius:4.5px;background:#595b5d"></div>
<div class="t serif" style="left:706px;top:601px;font-size:18px;line-height:20px;color:#d0d0d0;letter-spacing:1.3px">1 &lt; 10</div>
<div class="a" style="left:765px;top:119px;width:29px;height:144px;background:#414f6e;border-radius:0 6px 6px 0;"></div><div class="t mono" style="left:681px;top:183.0px;width:200px;height:20px;line-height:20px;text-align:center;font-size:18px;letter-spacing:-1.8px;color:#d0d0d0;-webkit-text-stroke:0.45px #414f6e;transform:rotate(-90deg)">Library Browser</div>
<div class="a" style="left:765px;top:264px;width:27px;height:144px;box-sizing:border-box;border:1px solid #2f3234;border-left:none;border-radius:0 6px 6px 0;background:#3c3f41;"></div><div class="t mono" style="left:681px;top:328.0px;width:200px;height:20px;line-height:20px;text-align:center;font-size:18px;letter-spacing:-1.8px;color:#d0d0d0;-webkit-text-stroke:0.45px #3c3f41;transform:rotate(-90deg)">Property Editor</div>
<div class="a" style="left:765px;top:409px;width:27px;height:100px;box-sizing:border-box;border:1px solid #2f3234;border-left:none;border-radius:0 6px 6px 0;background:#3c3f41;"></div><div class="t mono" style="left:681px;top:451.0px;width:200px;height:20px;line-height:20px;text-align:center;font-size:18px;letter-spacing:-1.8px;color:#d0d0d0;-webkit-text-stroke:0.45px #3c3f41;transform:rotate(-90deg)">Layer List</div>
<div class="a" style="left:794px;top:119px;width:1px;height:579px;background:#6e7072"></div>
<div class="a" style="left:796px;top:119px;width:290px;height:26px;background:#515151"></div>
<div class="t mono" style="left:860px;top:124px;font-size:18px;letter-spacing:-1.8px;color:#c6c6c6;-webkit-text-stroke:0.45px #515151">Library Browser</div>
<svg class="a" style="left:1052px;top:125px" width="32" height="14" viewBox="0 0 32 14">
<path d="M4.5 3.5H9.5V7.5M2.5 5.8H7.5V10.5H2.5Z" stroke="#000" stroke-width="1.4" fill="none"/>
<path d="M20.5 3L27.5 10M27.5 3L20.5 10" stroke="#000" stroke-width="1.5" fill="none"/></svg>
<div class="a" style="left:808px;top:158px;width:149px;height:36px;box-sizing:border-box;border:1px solid #2b2d2f;border-bottom:none;border-radius:6px 6px 0 0;background:#414f6e"></div>
<svg class="a" style="left:814px;top:164px" width="23" height="20" viewBox="0 0 23 20">
<path d="M0.6 3.4L3.6 3.2L4.6 1.2L20.6 0.6L19.6 8L4 18.4L2 18Z" fill="#a8a8a8" stroke="#6e6e6e" stroke-width="0.5"/>
<path d="M4.8 1.8L20 1L19 9L4.4 15Z" fill="#efefef"/><path d="M6 3.6L18.8 3M6 5.6L18.4 5" stroke="#bdbdbd" stroke-width="0.6"/>
<path d="M5 8.6L22.4 7.8L20 18.6L2.2 19Z" fill="#6da2de" stroke="#4a78b4" stroke-width="0.6"/>
<path d="M5.6 9.2L21.6 8.5L21 11Q12 12 5 13Z" fill="#9cc2ee" opacity="0.7"/></svg>
<div class="t mono" style="left:847px;top:169px;font-size:18px;letter-spacing:-1.8px;color:#d0d0d0;-webkit-text-stroke:0.45px #414f6e">File System</div>
<div class="a" style="left:957px;top:160px;width:104px;height:34px;box-sizing:border-box;border:1px solid #2b2d2f;border-bottom:none;border-radius:6px 6px 0 0;background:#3c3f41"></div>
<div class="a" style="left:1061px;top:160px;width:12px;height:34px;box-sizing:border-box;border:1px solid #2b2d2f;border-bottom:none;border-right:none;border-radius:6px 0 0 0;background:#3c3f41"></div>
<svg class="a" style="left:961px;top:166px" width="26" height="18" viewBox="0 0 26 18">
<path d="M4 8.5L9.5 5L12 4.6L12.4 7.4H13.6L14 4.6L16.5 5L22 8.5" fill="none" stroke="#7c7c7c" stroke-width="2.2"/>
<path d="M8 6L11 5M15 5L18 6" stroke="#c8c8c8" stroke-width="0.8"/>
<circle cx="4.9" cy="11.8" r="3.3" fill="#3a3a3a" stroke="#c4c4c4" stroke-width="1.3"/>
<circle cx="20.6" cy="11.8" r="3.5" fill="#3a3a3a" stroke="#c4c4c4" stroke-width="1.3"/>
<circle cx="4.9" cy="11.8" r="1.2" fill="#9a9a9a"/><circle cx="20.6" cy="11.8" r="1.3" fill="#9a9a9a"/></svg>
<div class="t mono" style="left:996px;top:169px;font-size:18px;letter-spacing:-1.8px;color:#d0d0d0;-webkit-text-stroke:0.45px #3c3f41;width:38px;overflow:hidden">Search</div>
<div class="a" style="left:1025px;top:158px;width:24px;height:36px;background:#313335"></div>
<svg class="a" style="left:1025px;top:158px" width="48" height="36" viewBox="0 0 48 36"><path d="M15.8 9.8V24.2L7.8 17Z" fill="#a8a8a8"/><path d="M32 9.8V24.2L40.2 17Z" fill="#000"/><path d="M42.5 14.5L48 16V28L46.6 28L46.4 19Z" fill="#e6b400"/></svg>
<div class="a" style="left:809px;top:194px;width:263px;height:24px;box-sizing:border-box;border:1px solid #5a5d5f;border-radius:3px;background:#45494a"></div>
<div class="a" style="left:1055px;top:195px;width:1px;height:22px;background:#5a5d5f"></div>
<svg class="a" style="left:1058px;top:202px" width="12" height="8" viewBox="0 0 12 8"><path d="M1 1.5H11L6 7Z" fill="#a8a8a8"/></svg>
<svg class="a" style="left:814px;top:196px" width="23" height="18" viewBox="0 0 23 20">
<path d="M0.6 3.4L3.6 3.2L4.6 1.2L20.6 0.6L19.6 8L4 18.4L2 18Z" fill="#a8a8a8" stroke="#6e6e6e" stroke-width="0.5"/>
<path d="M4.8 1.8L20 1L19 9L4.4 15Z" fill="#efefef"/><path d="M6 3.6L18.8 3M6 5.6L18.4 5" stroke="#bdbdbd" stroke-width="0.6"/>
<path d="M5 8.6L22.4 7.8L20 18.6L2.2 19Z" fill="#6da2de" stroke="#4a78b4" stroke-width="0.6"/>
<path d="M5.6 9.2L21.6 8.5L21 11Q12 12 5 13Z" fill="#9cc2ee" opacity="0.7"/></svg>
<div class="t mono" style="left:843px;top:197px;font-size:18px;letter-spacing:-1.8px;color:#b2b2b2;-webkit-text-stroke:0.45px #45494a">Architecture</div>
<div class="a" style="left:808px;top:218px;width:264px;height:10px;background:#323537"></div>
<div class="a" style="left:808px;top:194px;width:2px;height:457px;background:#313335"></div>
<div class="a" style="left:1071px;top:218px;width:1px;height:218px;background:#313335"></div>
<div class="a" style="left:810px;top:228px;width:249px;height:28px;background:linear-gradient(#585c5e,#4a4e50 45%,#3b3e40);border:1px solid #2d2f31;border-left:none;box-sizing:border-box"></div>
<div class="t" style="left:833px;top:231px;font-size:19px;line-height:22px;letter-spacing:-0.8px;color:#c4c4c4">名称</div>
<div class="a" style="left:810px;top:282px;width:249px;height:26px;background:#4b6eaf"></div>
<svg class="a" style="left:820px;top:265px" width="12" height="8" viewBox="0 0 12 8"><path d="M1 1H11L6 7Z" fill="#a9a9a9"/></svg>
<div class="a" style="left:844px;top:259px;width:24px;height:23px;overflow:hidden"><svg class="a" style="left:0px;top:0px" width="22" height="19" viewBox="0 0 22 19">
<path d="M0.6 1.2H8L9.6 3H20V17H0.6Z" fill="#a9a9a9" stroke="#5c5c5c" stroke-width="0.6"/>
<rect x="1.6" y="3.6" width="19.8" height="14.6" rx="1" fill="#6aa0dc" stroke="#3f72b4" stroke-width="0.7"/>
<path d="M2.2 4.2H20.8V9Q11 10.5 2.2 12.5Z" fill="#9cc4f0" opacity="0.65"/></svg></div>
<div class="row" style="left:873px;top:256px;width:auto;height:26px;overflow:hidden;letter-spacing:0.30px">Architecture</div>
<div class="a" style="left:874px;top:285px;width:24px;height:23px;overflow:hidden"><svg class="a" style="left:0px;top:0px" width="22" height="19" viewBox="0 0 22 19">
<path d="M0.6 1.2H8L9.6 3H20V17H0.6Z" fill="#a9a9a9" stroke="#5c5c5c" stroke-width="0.6"/>
<rect x="1.6" y="3.6" width="19.8" height="14.6" rx="1" fill="#6aa0dc" stroke="#3f72b4" stroke-width="0.7"/>
<path d="M2.2 4.2H20.8V9Q11 10.5 2.2 12.5Z" fill="#9cc4f0" opacity="0.65"/></svg></div>
<div class="row" style="left:903px;top:282px;width:auto;height:26px;overflow:hidden;letter-spacing:-1.29px">AIRFIT</div>
<svg class="a" style="left:852px;top:316px" width="7" height="11" viewBox="0 0 7 11"><path d="M1 0.5V10.5L6.4 5.5Z" fill="#a9a9a9"/></svg>
<div class="a" style="left:874px;top:311px;width:24px;height:23px;overflow:hidden"><svg class="a" style="left:0px;top:0px" width="22" height="19" viewBox="0 0 22 19">
<path d="M0.6 1.2H8L9.6 3H20V17H0.6Z" fill="#a9a9a9" stroke="#5c5c5c" stroke-width="0.6"/>
<rect x="1.6" y="3.6" width="19.8" height="14.6" rx="1" fill="#6aa0dc" stroke="#3f72b4" stroke-width="0.7"/>
<path d="M2.2 4.2H20.8V9Q11 10.5 2.2 12.5Z" fill="#9cc4f0" opacity="0.65"/></svg></div>
<div class="row" style="left:903px;top:308px;width:auto;height:26px;overflow:hidden;letter-spacing:-0.03px">Doors</div>
<svg class="a" style="left:852px;top:342px" width="7" height="11" viewBox="0 0 7 11"><path d="M1 0.5V10.5L6.4 5.5Z" fill="#a9a9a9"/></svg>
<div class="a" style="left:874px;top:337px;width:24px;height:23px;overflow:hidden"><svg class="a" style="left:0px;top:0px" width="22" height="19" viewBox="0 0 22 19">
<path d="M0.6 1.2H8L9.6 3H20V17H0.6Z" fill="#a9a9a9" stroke="#5c5c5c" stroke-width="0.6"/>
<rect x="1.6" y="3.6" width="19.8" height="14.6" rx="1" fill="#6aa0dc" stroke="#3f72b4" stroke-width="0.7"/>
<path d="M2.2 4.2H20.8V9Q11 10.5 2.2 12.5Z" fill="#9cc4f0" opacity="0.65"/></svg></div>
<div class="row" style="left:903px;top:334px;width:auto;height:26px;overflow:hidden;letter-spacing:-0.34px">Electrics</div>
<svg class="a" style="left:852px;top:368px" width="7" height="11" viewBox="0 0 7 11"><path d="M1 0.5V10.5L6.4 5.5Z" fill="#a9a9a9"/></svg>
<div class="a" style="left:874px;top:363px;width:24px;height:23px;overflow:hidden"><svg class="a" style="left:0px;top:0px" width="22" height="19" viewBox="0 0 22 19">
<path d="M0.6 1.2H8L9.6 3H20V17H0.6Z" fill="#a9a9a9" stroke="#5c5c5c" stroke-width="0.6"/>
<rect x="1.6" y="3.6" width="19.8" height="14.6" rx="1" fill="#6aa0dc" stroke="#3f72b4" stroke-width="0.7"/>
<path d="M2.2 4.2H20.8V9Q11 10.5 2.2 12.5Z" fill="#9cc4f0" opacity="0.65"/></svg></div>
<div class="row" style="left:903px;top:360px;width:auto;height:26px;overflow:hidden;letter-spacing:-0.06px">Exterior</div>
<svg class="a" style="left:852px;top:394px" width="7" height="11" viewBox="0 0 7 11"><path d="M1 0.5V10.5L6.4 5.5Z" fill="#a9a9a9"/></svg>
<div class="a" style="left:874px;top:389px;width:24px;height:23px;overflow:hidden"><svg class="a" style="left:0px;top:0px" width="22" height="19" viewBox="0 0 22 19">
<path d="M0.6 1.2H8L9.6 3H20V17H0.6Z" fill="#a9a9a9" stroke="#5c5c5c" stroke-width="0.6"/>
<rect x="1.6" y="3.6" width="19.8" height="14.6" rx="1" fill="#6aa0dc" stroke="#3f72b4" stroke-width="0.7"/>
<path d="M2.2 4.2H20.8V9Q11 10.5 2.2 12.5Z" fill="#9cc4f0" opacity="0.65"/></svg></div>
<div class="row" style="left:903px;top:386px;width:auto;height:26px;overflow:hidden;letter-spacing:-0.31px">Gas Heating</div>
<svg class="a" style="left:852px;top:420px" width="7" height="11" viewBox="0 0 7 11"><path d="M1 0.5V10.5L6.4 5.5Z" fill="#a9a9a9"/></svg>
<div class="a" style="left:874px;top:415px;width:24px;height:20px;overflow:hidden"><svg class="a" style="left:0px;top:0px" width="22" height="19" viewBox="0 0 22 19">
<path d="M0.6 1.2H8L9.6 3H20V17H0.6Z" fill="#a9a9a9" stroke="#5c5c5c" stroke-width="0.6"/>
<rect x="1.6" y="3.6" width="19.8" height="14.6" rx="1" fill="#6aa0dc" stroke="#3f72b4" stroke-width="0.7"/>
<path d="M2.2 4.2H20.8V9Q11 10.5 2.2 12.5Z" fill="#9cc4f0" opacity="0.65"/></svg></div>
<div class="row" style="left:903px;top:412px;width:auto;height:23px;overflow:hidden;letter-spacing:0.40px">Interior</div>
<div class="a" style="left:810px;top:435px;width:262px;height:1px;background:#2f3133"></div>
<div class="a" style="left:1060px;top:229px;width:10px;height:101px;border-radius:5px;background:#595b5d"></div>
<div class="a" style="left:810px;top:444px;width:262px;height:207px;background:#000"></div>
<div class="a" style="left:1061px;top:445px;width:9px;height:96px;border-radius:4.5px;background:#595b5d"></div>
<div class="a" style="left:808px;top:651px;width:265px;height:1px;background:#313335"></div>
<div class="a" style="left:1072px;top:444px;width:1px;height:208px;background:#313335"></div>
<svg class="a" style="left:810px;top:444px" width="262" height="207" viewBox="810 444 262 207" fill="none" stroke="#fff" stroke-width="1"><rect x="835" y="446.5" width="22.5" height="44.5"/><path d="M835 481.5H857.5M835 489.5H857.5" stroke="#ddd"/><rect x="837.5" y="483.5" width="8" height="4.5" fill="#ddd" stroke="none"/><rect x="848.5" y="484.5" width="6" height="2.5" fill="#ccc" stroke="none"/><rect x="905.5" y="446.5" width="25" height="44.5" rx="2"/><rect x="913" y="480.5" width="10" height="6.5" rx="1.5"/><path d="M909.5 478.5H915M915 484.5H921" stroke="#ddd" stroke-width="1.4"/><rect x="967.5" y="462.5" width="34" height="13" stroke="#fff"/><rect x="969" y="464" width="31" height="10" fill="#f2f2f2" stroke="none"/><rect x="991" y="465.5" width="7.5" height="8" fill="#e8141c" stroke="none"/><rect x="970" y="465" width="4" height="5" fill="#e8141c" stroke="none"/><rect x="975" y="465" width="5" height="3" fill="#20c8e0" stroke="none"/><rect x="976" y="469.5" width="3" height="4" fill="#f0e020" stroke="none"/><rect x="981" y="466" width="4" height="4" fill="#3050e0" stroke="none"/><rect x="985.5" y="468" width="4" height="5" fill="#20c8e0" stroke="none"/><path d="M1002 466.5H1011M1002 471.5H1011M1011.5 463V476" stroke="#f0f0f0"/><rect x="1010" y="461.5" width="2.5" height="2.5" fill="#30d030" stroke="none"/><rect x="823.5" y="533.5" width="22" height="11" stroke="#f4f4f4"/><rect x="825.5" y="535" width="9.5" height="8" fill="#e8141c" stroke="none"/><rect x="836" y="535.5" width="6" height="5" fill="#20c8e0" stroke="none"/><rect x="838" y="537" width="3" height="4" fill="#e040a0" stroke="none"/><rect x="845.5" y="534.5" width="5" height="9" stroke="#f0e020"/><circle cx="853.5" cy="539" r="4" fill="#e8e8e8" stroke="none"/><path d="M858.5 530V547M858.5 530.5H866" stroke="#f0f0f0"/><rect x="860" y="529.5" width="5" height="2.5" fill="#f0e020" stroke="none"/><circle cx="858.5" cy="545" r="1.6" fill="#e8141c" stroke="none"/><path d="M856 548.5H869" stroke="#30d030" stroke-width="2"/><path d="M858 551H866" stroke="#20c8e0" stroke-width="2"/><path d="M860 545.5H868" stroke="#f0e020" stroke-width="1.4"/><rect x="911.5" y="531.5" width="29.5" height="18.5" stroke="#20e020" stroke-width="1.4"/><rect x="907" y="534" width="6" height="15.5" stroke="#f0e020"/><path d="M896 533.5H911M900 541.5H909M899 545H909M900 548.5H909" stroke="#e8e8e8"/><rect x="914" y="537" width="5" height="10" fill="#f4f4f4" stroke="none"/><rect x="921" y="537" width="5" height="10" fill="#f4f4f4" stroke="none"/><rect x="934" y="536" width="4" height="11" fill="#f4f4f4" stroke="none"/><path d="M913 534.5H940" stroke="#f0e020"/><rect x="927" y="538" width="5" height="4" fill="#909020" stroke="none"/><path d="M925.5 531V535" stroke="#fff"/><rect x="915" y="533" width="3" height="1.6" fill="#e8141c" stroke="none"/><rect x="930" y="533" width="3" height="1.6" fill="#e8141c" stroke="none"/><rect x="967.5" y="525.5" width="45" height="31" stroke="#8c8c8c" stroke-width="1.2"/><rect x="973" y="528.5" width="9" height="6.5" fill="#f4f4f4" stroke="none"/><path d="M982 531H1000M984 534H996" stroke="#e8e8e8"/><path d="M980 528.5H988M981 529V536M988 533.5H995" stroke="#2040e8" stroke-width="1.2"/><rect x="996.5" y="528.5" width="5" height="7"/><path d="M1002 530.5H1008M1002 533.5H1007" stroke="#2040e8"/><rect x="974.5" y="543.5" width="13" height="6.5"/><rect x="977" y="545" width="4" height="3" fill="#ddd" stroke="none"/><path d="M994 545.5L998 542.5H1009.5V548L1006 551H994Z"/><rect x="996" y="546" width="5" height="3" fill="#ddd" stroke="none"/><rect x="979" y="539" width="3" height="1.4" fill="#e8a020" stroke="none"/><rect x="998" y="539" width="3" height="1.4" fill="#e8a020" stroke="none"/><rect x="979" y="552.5" width="3" height="1.4" fill="#e8a020" stroke="none"/><rect x="987" y="553" width="4" height="1.6" fill="#f0e020" stroke="none"/><rect x="823.5" y="600.5" width="45" height="25" stroke="#cfcfcf"/><path d="M823.5 607.5H868.5M835.5 607.5V625.5M857.5 607.5V625.5M823.5 603.5H868.5" stroke="#cfcfcf"/><path d="M827 606H832M843 606H848M860 606H865" stroke="#9a9a9a"/><path d="M832.5 613V616M860.5 613V616" stroke="#bbb"/><rect x="898.5" y="608.5" width="39" height="9" stroke="#e8e8e8"/><rect x="895.5" y="610.5" width="3" height="5" fill="#ddd" stroke="#ddd"/><rect x="937.5" y="610.5" width="3" height="5" fill="#ddd" stroke="#ddd"/><rect x="968" y="596.5" width="44.5" height="33.5" stroke="#fff" stroke-width="1.4"/><rect x="971.5" y="599.5" width="2.4" height="27" rx="1.2" stroke="#f0f0f0" stroke-width="0.9"/><rect x="975.6" y="599.5" width="2.4" height="27" rx="1.2" stroke="#f0f0f0" stroke-width="0.9"/><rect x="979.7" y="599.5" width="2.4" height="27" rx="1.2" stroke="#f0f0f0" stroke-width="0.9"/><rect x="983.8" y="599.5" width="2.4" height="27" rx="1.2" stroke="#f0f0f0" stroke-width="0.9"/><rect x="987.9" y="599.5" width="2.4" height="27" rx="1.2" stroke="#f0f0f0" stroke-width="0.9"/><rect x="992.0" y="599.5" width="2.4" height="27" rx="1.2" stroke="#f0f0f0" stroke-width="0.9"/><rect x="996.1" y="599.5" width="2.4" height="27" rx="1.2" stroke="#f0f0f0" stroke-width="0.9"/><rect x="1000.2" y="599.5" width="2.4" height="27" rx="1.2" stroke="#f0f0f0" stroke-width="0.9"/><rect x="1004.3" y="599.5" width="2.4" height="27" rx="1.2" stroke="#f0f0f0" stroke-width="0.9"/><rect x="1008.4" y="599.5" width="2.4" height="27" rx="1.2" stroke="#f0f0f0" stroke-width="0.9"/><path d="M970 613H1011" stroke="#bbb" stroke-width="0.8"/></svg>
<div class="lbl" style="left:809px;top:495px">AIR...</div>
<div class="lbl" style="left:881px;top:495px">AIR...</div>
<div class="lbl" style="left:953px;top:495px">形...</div>
<div class="lbl" style="left:809px;top:567px">形...</div>
<div class="lbl" style="left:881px;top:567px">形...</div>
<div class="lbl" style="left:953px;top:567px">接...</div>
<div class="a" style="left:810px;top:632px;width:250px;height:19px;overflow:hidden"><div class="lbl" style="left:-1px;top:9px">接...</div><div class="lbl" style="left:71px;top:9px">新...</div><div class="lbl" style="left:143px;top:9px">暖...</div></div>
<div class="rb on" style="top:132px"><div class="ic" style="left:7px;top:7px"><svg style="position:absolute;left:0;top:0" width="27" height="27" viewBox="0 0 27 27" fill="none"><path d="M8 10L16 7V19L8 22Z" fill="#d8d8d8" stroke="#555" stroke-width="0.7"/><path d="M10 10.4L18 7.4V19.4L10 22.4Z" fill="#e8e8e8" stroke="#555" stroke-width="0.7"/><path d="M12 10.8L20 7.8V19.8L12 22.8Z" fill="#fff" stroke="#555" stroke-width="0.7"/><path d="M14 19.5L18.6 10.5V18Z" fill="#f8c8c8" stroke="#e02020" stroke-width="0.8"/></svg></div></div>
<div class="rb" style="top:173px"><div class="ic" style="left:6px;top:7px"><svg style="position:absolute;left:0;top:0" width="27" height="27" viewBox="0 0 27 27" fill="none"><rect x="6.5" y="10.5" width="10" height="7.5" fill="#f4e8c0" stroke="#8a8468" stroke-width="0.8"/><circle cx="15.4" cy="17.4" r="4.4" fill="#f0e4b8" fill-opacity="0.85" stroke="#8a8468" stroke-width="0.8"/></svg></div></div>
<div class="rb" style="top:214px"><div class="ic" style="left:6px;top:7px"><svg style="position:absolute;left:0;top:0" width="27" height="27" viewBox="0 0 27 27" fill="none"><rect x="5.5" y="10.5" width="16" height="10.5" rx="2" fill="#f2f2f2" stroke="#b4c6e8" stroke-width="1"/></svg></div></div>
<div class="rb on" style="top:264px"><div class="ic" style="left:7px;top:7px"><svg style="position:absolute;left:0;top:0" width="27" height="27" viewBox="0 0 27 27" fill="none"><rect x="2.6" y="8.2" width="4.2" height="3.6" fill="#000"/><rect x="9.9" y="8.4" width="14" height="3.2" fill="#fff" stroke="#222" stroke-width="0.8"/><rect x="2.6" y="14.2" width="4.2" height="3.6" fill="#000"/><rect x="9.9" y="14.4" width="14" height="3.2" fill="#fff" stroke="#222" stroke-width="0.8"/><rect x="2.6" y="20.2" width="4.2" height="3.6" fill="#000"/><rect x="9.9" y="20.4" width="14" height="3.2" fill="#fff" stroke="#222" stroke-width="0.8"/></svg></div></div>
<div class="rb" style="top:305px"><div class="ic" style="left:6px;top:7px"><svg style="position:absolute;left:0;top:0" width="27" height="27" viewBox="0 0 27 27" fill="none"><defs><linearGradient id="fn" x1="0" y1="0" x2="1" y2="0"><stop offset="0" stop-color="#a8a8a8"/><stop offset="0.5" stop-color="#e0e0e0"/><stop offset="1" stop-color="#8a8a8a"/></linearGradient></defs><path d="M6.5 10.5Q13.5 7 20.5 10.5L15.2 17V23L12 21.6V17Z" fill="url(#fn)" stroke="#8a8a8a" stroke-width="0.5"/><ellipse cx="13.5" cy="10.4" rx="7" ry="1.8" fill="#7a7a7a"/></svg></div></div>
<div class="rb on" style="top:346px"><div class="ic" style="left:7px;top:7px"><svg style="position:absolute;left:0;top:0" width="27" height="27" viewBox="0 0 27 27" fill="none"><path d="M5.5 8L9.5 11.5V19L5.5 22.5Z" fill="#fff" stroke="#444" stroke-width="0.8"/><rect x="9.5" y="11.5" width="10" height="7.5" fill="#666" stroke="#333" stroke-width="0.6"/><path d="M11 11.5V19M13 11.5V19M15 11.5V19M17 11.5V19" stroke="#222" stroke-width="0.7"/><path d="M3 15.2H23" stroke="#f06060" stroke-width="0.8" stroke-dasharray="2.5 1"/></svg></div></div>
<div class="rb on" style="top:396px"><div class="ic" style="left:7px;top:7px"><svg style="position:absolute;left:0;top:0" width="27" height="27" viewBox="0 0 27 27" fill="none"><path d="M2.5 9.8H16.5M2.5 12.8H14.5M2.5 15.8H17.5M2.5 18.8H16.5" stroke="#555" stroke-width="1.1" stroke-dasharray="5 0.8 3 0.6"/><rect x="0.5" y="21.5" width="26" height="5" fill="#fff" stroke="#222" stroke-width="0.8"/><path d="M3 24H5M9 24H24" stroke="#333" stroke-width="1.1"/></svg></div></div>
<div class="rb" style="top:437px"><div class="ic" style="left:6px;top:7px"><svg style="position:absolute;left:0;top:0" width="27" height="27" viewBox="0 0 27 27" fill="none"><rect x="7" y="9.5" width="13.5" height="15" rx="1" fill="#c8811f" stroke="#9a5f10" stroke-width="0.6"/><path d="M8.6 11.5H19V21L16.5 23.4H8.6Z" fill="#f4f4f4"/><path d="M19 21L16.5 23.4V21Z" fill="#999"/><rect x="10.4" y="8" width="6.8" height="3.2" rx="0.8" fill="#a2a294" stroke="#77776c" stroke-width="0.4"/><path d="M10.4 14H17M10.4 16H17M10.4 18H15.5" stroke="#c8c8c8" stroke-width="0.7"/></svg></div></div>
<div class="a" style="left:926px;top:656px;width:114px;height:29px;background:#313335"></div>
<svg class="a" style="left:853px;top:658px" width="24" height="25" viewBox="0 0 24 25">
<defs><linearGradient id="ba" x1="0" y1="0" x2="1" y2="0"><stop offset="0" stop-color="#7da2ff"/><stop offset="1" stop-color="#1c44e0"/></linearGradient></defs>
<path d="M5 3.5C10 1.5 15.6 3 15.8 9V14.5H19.8L14.2 22.4L8.8 14.5H12.6V9.5C12.5 6 9 5.5 5.6 6.6Z" fill="url(#ba)" stroke="#2a4ae0" stroke-width="0.6"/></svg>
<svg class="a" style="left:970px;top:658px" width="26" height="26" viewBox="0 0 26 26">
<defs><linearGradient id="ga" x1="0" y1="0" x2="1" y2="0"><stop offset="0" stop-color="#dadada"/><stop offset="1" stop-color="#8a8a8a"/></linearGradient></defs>
<path d="M21 21.5C16 23.5 11.8 22 11.6 16V10.5H7.6L13.2 2.6L18.8 10.5H14.8V15.5C14.9 19 17.5 19.5 20.4 18.4Z" fill="url(#ga)" stroke="#9a9a9a" stroke-width="0.5"/></svg>
<svg class="a" style="left:1047px;top:658px" width="24" height="26" viewBox="0 0 24 26">
<path d="M10.5 7.5C10 2.5 18 1.5 19 6.5C19.6 9.6 16 11 14.6 10.4" fill="none" stroke="#8c98f0" stroke-width="2.4"/><path d="M7 6.2L13.6 5.8L10.6 11.4Z" fill="#8c98f0"/>
<g fill="#d2d2d2" stroke="#8c8c8c" stroke-width="0.6"><ellipse cx="7.4" cy="21.4" rx="5.6" ry="2.2"/><ellipse cx="7.4" cy="19" rx="5.6" ry="2.2"/><ellipse cx="7.4" cy="16.6" rx="5.6" ry="2.2"/><ellipse cx="7.4" cy="14.2" rx="5.6" ry="2.2" fill="#ececec"/></g></svg>
<div class="a" style="left:86px;top:626px;width:1px;height:72px;background:#8a8a8a"></div>
<div class="a" style="left:758px;top:626px;width:1px;height:72px;background:#8a8a8a"></div>
<div class="a" style="left:87px;top:665px;width:671px;height:1px;background:#2e3032"></div>
<div class="t mono" style="left:92px;top:634px;font-size:18px;letter-spacing:-1.8px;color:#3f9af0;-webkit-text-stroke:0.45px #3c3f41"><i>Command:</i> new</div>
<div class="t mono" style="left:87px;top:675px;font-size:18px;letter-spacing:-1.8px;color:#d0d0d0;-webkit-text-stroke:0.45px #3c3f41">Command:</div>
<div class="a" style="left:168px;top:672px;width:561px;height:21px;background:#45494a"></div>
<svg class="a" style="left:732px;top:674px" width="22" height="15" viewBox="0 0 22 15"><rect x="0.6" y="1.2" width="20" height="12.8" fill="none" stroke="#e8e8e8" stroke-width="1.2"/><path d="M0.6 4.4H20.6" stroke="#e8e8e8" stroke-width="1"/><rect x="16.6" y="0.4" width="3" height="3" fill="#fff"/></svg>
<div class="a" style="left:224px;top:76px;width:244px;height:406px;box-sizing:border-box;background:#3c3f41;border:1px solid #34373a;border-right:1px solid #26282a;border-bottom:1px solid #26282a;z-index:20"></div>
<div class="a" style="left:0;top:0;width:1130px;height:699px;z-index:21;pointer-events:none"><div class="pm" style="top:80.7px;font-size:19.5px;letter-spacing:0.34px">Point</div><div class="arr" style="top:85.7px"></div><div class="pm" style="top:111.6px;font-size:19.5px;letter-spacing:-0.46px">Line</div><div class="arr" style="top:116.6px"></div><div class="pm" style="top:142.5px;font-size:19.5px;letter-spacing:-0.97px">弧线(A)</div><div class="arr" style="top:147.5px"></div><div class="pm" style="top:173.5px;font-size:19.5px;letter-spacing:-1.49px">圆(C)</div><div class="arr" style="top:178.5px"></div><div class="pm" style="top:204.5px;font-size:19.5px;letter-spacing:-1.60px">椭圆(E)</div><div class="arr" style="top:209.5px"></div><div class="pm" style="top:235.7px;font-size:19.5px;letter-spacing:-0.08px">Spline</div><div class="arr" style="top:240.7px"></div><div class="pm" style="top:266.6px;font-size:19.5px;letter-spacing:0.09px">Polyline</div><div class="arr" style="top:271.6px"></div><div class="pm" style="top:297.5px;font-size:19.5px;letter-spacing:-0.65px">Shape</div><div class="arr" style="top:302.5px"></div><div class="pm" style="top:328.5px;font-size:19.5px;letter-spacing:-1.16px">图案填充(H)</div><div class="arr" style="top:333.5px"></div><div class="pm" style="top:359.5px;font-size:19.5px;letter-spacing:0.43px">Viewport</div><div class="arr" style="top:364.5px"></div><div class="pm" style="top:390.3px;font-size:19.5px;letter-spacing:-0.07px">Ring</div><div class="pm" style="left:429px;top:390.3px;font-size:19.5px;letter-spacing:-1.60px">RI</div><div class="pm" style="top:423.0px;font-size:19.5px;letter-spacing:0.34px">Text</div><div class="pm" style="left:429px;top:423.0px;font-size:19.5px;letter-spacing:-1.60px">TE</div><div class="pm" style="top:454.0px;font-size:19.5px;letter-spacing:0.02px">Insert Bitmap</div><div class="pm" style="left:429px;top:454.0px;font-size:19.5px;letter-spacing:1.00px">IM</div><div class="a" style="left:228px;top:417px;width:236px;height:1px;background:#515456"></div><svg class="a" style="left:229px;top:391px" width="21" height="21" viewBox="0 0 21 21"><circle cx="10.3" cy="10.5" r="7" fill="none" stroke="#f8c41c" stroke-width="3.6"/></svg><div class="t serif" style="left:229px;top:422px;width:20px;text-align:center;font-size:23px;line-height:26px;color:#eaeaea">A</div></div>
<div class="a" style="left:0;top:0;z-index:22"><svg class="a" style="left:229px;top:459px" width="20" height="15" viewBox="0 0 26 20" preserveAspectRatio="none">
<defs><linearGradient id="skb" x1="0" y1="0" x2="0" y2="1"><stop offset="0" stop-color="#6fa3de"/><stop offset="1" stop-color="#a9c7e8"/></linearGradient></defs>
<rect width="26" height="20" fill="url(#skb)"/>
<path d="M0 0H3L10 5L17 9L19 12L0 16Z" fill="#3d4650"/>
<path d="M0 3L8 7L16 10.5L17 12L0 13Z" fill="#262d36"/>
<path d="M2 5L9 8M3 8L12 10" stroke="#8e9aa6" stroke-width="0.6"/>
<path d="M23 3H26V20H14L21 10Z" fill="#b9b4a8"/>
<path d="M0 13L18 11.5L21 10L14 20H0Z" fill="#8c8474"/>
<path d="M0 15L15 12.5L9 20H0Z" fill="#a89878"/>
<path d="M0 17.5L10 15L6 20H0Z" fill="#6e7680"/>
<path d="M23.5 2.5H26V12H22.5Z" fill="#c8c2b4"/>
<rect width="26" height="20" fill="none" stroke="#7f8fa0" stroke-width="0.5"/>
</svg></div>
</div></body></html>
